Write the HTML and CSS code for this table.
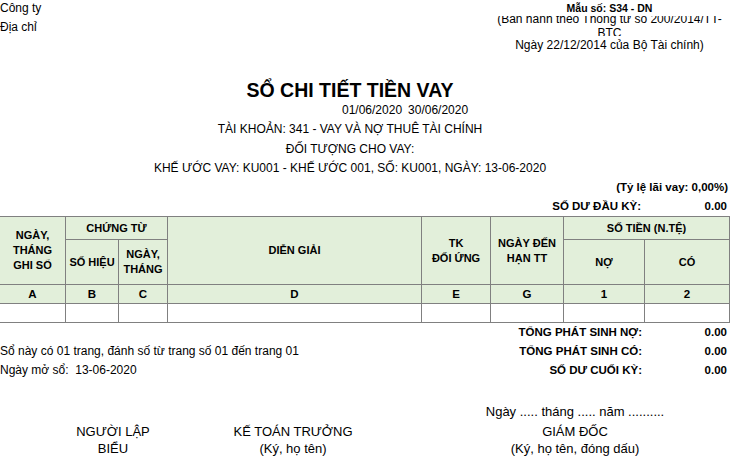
FILE: index.html
```html
<!DOCTYPE html>
<html lang="vi">
<head>
<meta charset="utf-8">
<title>Sổ chi tiết tiền vay</title>
<link rel="stylesheet" href="styles.css">
</head>
<body>
<div class="page">
  <header class="top">
    <div class="company">
      <div>Công ty</div>
      <div>Địa chỉ</div>
    </div>
    <div class="form-no">
      <div class="form-code">Mẫu số: S34 - DN</div>
      <div class="form-clip"><div class="form-clip-in">(Ban hành theo Thông tư số 200/2014/TT-<br>BTC</div></div>
      <div class="form-date">Ngày 22/12/2014 của Bộ Tài chính)</div>
    </div>
  </header>

  <h1 class="title">SỔ CHI TIẾT TIỀN VAY</h1>
  <div class="period"><span>01/06/2020</span><span class="to">30/06/2020</span></div>
  <div class="sub">TÀI KHOẢN: 341 - VAY VÀ NỢ THUÊ TÀI CHÍNH</div>
  <div class="sub">ĐỐI TƯỢNG CHO VAY:</div>
  <div class="sub">KHẾ ƯỚC VAY: KU001 - KHẾ ƯỚC 001, SỐ: KU001, NGÀY: 13-06-2020</div>

  <div class="rate">(Tỷ lệ lãi vay: 0,00%)</div>
  <div class="sumrow"><span class="lbl">SỐ DƯ ĐẦU KỲ:</span><span class="val">0.00</span></div>

  <table class="ledger">
    <colgroup>
      <col class="c1"><col class="c2"><col class="c3"><col class="c4"><col class="c5"><col class="c6"><col class="c7"><col class="c8">
    </colgroup>
    <thead>
      <tr class="h1">
        <th rowspan="2">NGÀY,<br>THÁNG<br>GHI SỔ</th>
        <th colspan="2">CHỨNG TỪ</th>
        <th rowspan="2">DIỄN GIẢI</th>
        <th rowspan="2">TK<br>ĐỐI ỨNG</th>
        <th rowspan="2">NGÀY ĐẾN<br>HẠN TT</th>
        <th colspan="2">SỐ TIỀN (N.TỆ)</th>
      </tr>
      <tr class="h2">
        <th>SỐ HIỆU</th>
        <th>NGÀY,<br>THÁNG</th>
        <th>NỢ</th>
        <th>CÓ</th>
      </tr>
      <tr class="letters">
        <th>A</th><th>B</th><th>C</th><th>D</th><th>E</th><th>G</th><th>1</th><th>2</th>
      </tr>
    </thead>
    <tbody>
      <tr class="empty">
        <td></td><td></td><td></td><td></td><td></td><td></td><td></td><td></td>
      </tr>
    </tbody>
  </table>

  <div class="totals">
    <span class="lbl r1">TỔNG PHÁT SINH NỢ:</span><span class="val r1">0.00</span>
    <span class="note r2">Sổ này có 01 trang, đánh số từ trang số 01 đến trang 01</span>
    <span class="lbl r2">TỔNG PHÁT SINH CÓ:</span><span class="val r2">0.00</span>
    <span class="note r3">Ngày mở sổ:&nbsp; 13-06-2020</span>
    <span class="lbl r3">SỐ DƯ CUỐI KỲ:</span><span class="val r3">0.00</span>
  </div>

  <div class="signs">
    <div class="sign s1">NGƯỜI LẬP BIỂU</div>
    <div class="sign s2">KẾ TOÁN TRƯỞNG<br>(Ký, họ tên)</div>
    <div class="sign s3"><div class="sign-date">Ngày ..... tháng ..... năm ..........</div>GIÁM ĐỐC<br>(Ký, họ tên, đóng dấu)</div>
  </div>
</div>
</body>
</html>
```

FILE: styles.css
```css
* { box-sizing: border-box; }
html, body { margin: 0; padding: 0; background: #fff; }
body {
  font-family: "Liberation Sans", Arial, sans-serif;
  font-size: 12px;
  color: #000;
}
.page { width: 747px; }

.top {
  width: 729px;
  height: 79px;
  display: flex;
  justify-content: space-between;
}
.company { display: flex; flex-direction: column; gap: 5px; line-height: 14px; padding-top: 1px; }
.form-no { width: 239px; text-align: center; }
.form-code { font-weight: bold; font-size: 10.5px; line-height: 16px; height: 16px; }
.form-clip { height: 20px; overflow: hidden; }
.form-clip-in { margin-top: -4px; line-height: 14px; }
.form-date { margin-top: 2px; line-height: 14px; }

.title {
  margin: 0;
  width: 700px;
  text-align: center;
  font-size: 19.5px;
  line-height: 22px;
  font-weight: bold;
}
.period { line-height: 19.25px; padding-left: 342px; }
.period .to { margin-left: 6px; }
.sub { width: 700px; text-align: center; line-height: 19.25px; }

.rate {
  width: 729px;
  text-align: right;
  padding-right: 1px;
  font-weight: bold;
  font-size: 11.5px;
  line-height: 19px;
}
.sumrow {
  width: 729px;
  display: flex;
  justify-content: flex-end;
  font-weight: bold;
  font-size: 11.5px;
  line-height: 19px;
}
.sumrow .lbl { padding-right: 2px; margin-right: 1px; }
.sumrow .val { width: 85px; text-align: right; padding-right: 2px; }

.ledger {
  width: 730px;
  table-layout: fixed;
  border-collapse: separate;
  border-spacing: 0;
  border-top: 1px solid #808080;
}
.ledger col.c1 { width: 66px; }
.ledger col.c2 { width: 53px; }
.ledger col.c3 { width: 49px; }
.ledger col.c4 { width: 254px; }
.ledger col.c5 { width: 69px; }
.ledger col.c6 { width: 73px; }
.ledger col.c7 { width: 81px; }
.ledger col.c8 { width: 85px; }
.ledger th, .ledger td {
  padding: 0;
  border-right: 1px solid #808080;
  border-bottom: 1px solid #808080;
  text-align: center;
  vertical-align: middle;
}
.ledger th {
  background: #e2efda;
  font-weight: bold;
  font-size: 11px;
  line-height: 15px;
}
.ledger tr.h1 { height: 23px; }
.ledger tr.h2 { height: 45px; }
.ledger tr.letters { height: 19px; }
.ledger tr.letters th { font-size: 11.5px; line-height: 14px; }
.ledger tr.empty { height: 19px; }

.totals {
  width: 729px;
  display: grid;
  grid-template-columns: 1fr 200px 85px;
  grid-template-rows: 19px 19px 19px;
  line-height: 19px;
}
.totals .lbl, .totals .val { font-weight: bold; font-size: 11.5px; text-align: right; padding-right: 2px; }
.totals .lbl { grid-column: 2; }
.totals .val { grid-column: 3; }
.totals .note { grid-column: 1; white-space: nowrap; }
.totals .r1 { grid-row: 1; }
.totals .r2 { grid-row: 2; }
.totals .r3 { grid-row: 3; }

.signs {
  margin-top: 21px;
  display: flex;
  padding-left: 73px;
  font-size: 13px;
  line-height: 17px;
}
.sign { text-align: center; padding-top: 22px; }
.s1 { width: 80px; }
.s2 { width: 160px; margin-left: 60px; }
.s3 { width: 220px; margin-left: 92px; padding-top: 0; }
.sign-date { line-height: 22px; }
```
